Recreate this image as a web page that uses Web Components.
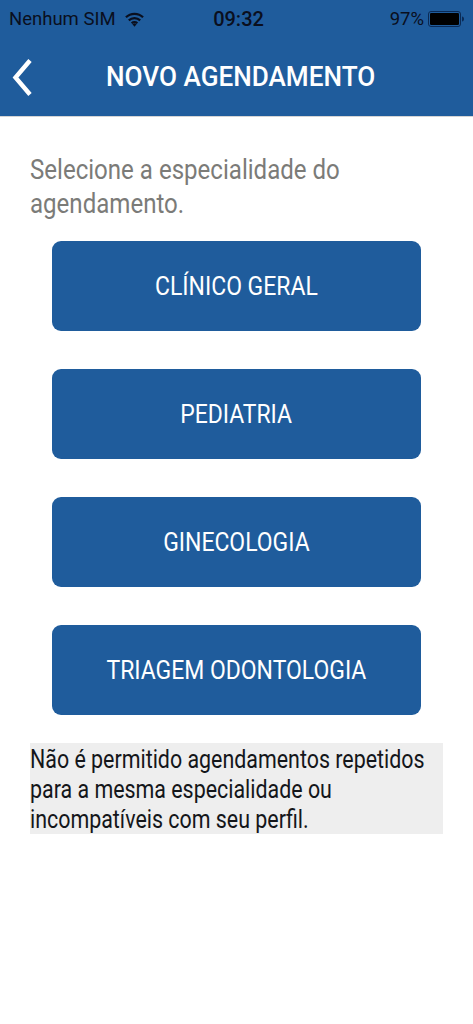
<!DOCTYPE html>
<title>Novo agendamento</title>
<meta charset=utf-8>
<style>
html, body { margin: 0; background: #fff; }
body { font-family: Roboto, "Liberation Sans", sans-serif; }
</style>

<template id=status-tpl>
<style>
:host { display: grid; grid-template-columns: 1fr auto 1fr; align-items: center; height: 38px; padding: 0 9px 0 9px; color: #0a0f1e; font-size: 18.5px; box-sizing: border-box; }
.left, .right { display: flex; align-items: center; }
.left { gap: 9px; }
.right { justify-content: flex-end; gap: 4px; }
.time { font-weight: 500; font-size: 20px; margin-left: 4px; }
svg { display: block; }
</style>
<div class=left><span>Nenhum SIM</span>
<svg width=19 height=15 viewBox="0 0 20 15"><path d="M1 5.2a12.8 12.8 0 0 1 18 0M4 8.4a8.6 8.6 0 0 1 12 0M7 11.4a4.4 4.4 0 0 1 6 0" fill=none stroke="#0a0f1e" stroke-width=2.3 /><path d="M10 15l-2.2-2.4a3 3 0 0 1 4.4 0z" fill="#0a0f1e"/></svg></div>
<div class=time>09:32</div>
<div class=right><span>97%</span>
<svg width=36 height=18 viewBox="0 0 36 18"><rect x=.5 y=1.5 width=32 height=15 rx=2.5 fill=none stroke="#0a2a55"/><rect x=2 y=3 width=29 height=12 rx=1.2 fill="#000"/><path d="M34 6.5c1.2.2 2 1 2 2.5s-.8 2.3-2 2.5z" fill="#0a2a55"/></svg></div>
</template>

<template id=nav-tpl>
<style>
:host { display: grid; grid-template-columns: 1fr auto 1fr; align-items: center; height: 78px; background: #1f5c9c; color: #fff; box-sizing: border-box; }
.t { font-size: 27.5px; font-weight: 500; padding-bottom: 1px; margin-left: 8px; transform: scaleX(.95); }
svg { display: block; margin-left: 12px; }
</style>
<svg width=21 height=39 viewBox="0 0 21 39"><path d="M18 2.5L3.5 19.5L18 36.5" fill=none stroke="#fff" stroke-width=4.4 /></svg>
<div class=t><slot></slot></div>
<span></span>
</template>

<template id=btn-tpl>
<style>
:host { display: flex; align-items: center; justify-content: center; height: 90px; border-radius: 9px; background: #1f5c9c; color: #fff; font-size: 25.5px; }
span { transform: scaleX(.9); white-space: nowrap; }
</style>
<span><slot></slot></span>
</template>

<template id=app-tpl>
<style>
:host { display: block; height: 1024px; overflow: hidden; }
header { background: #1f5c9c; border-bottom: 1px solid #d4d4d4; }
main { padding: 36px 30px 0; }
.lead { margin: 0; font-size: 27.5px; line-height: 34px; color: #7b7b78; width: calc(100% / .875); transform: scaleX(.875); transform-origin: 0 0; }
.list { display: flex; flex-direction: column; gap: 38px; margin: 20px 22px 0; }
.note { margin: 28px 0 0; background: #eeeeee; height: 91px; padding-top: 2px; box-sizing: border-box; overflow: hidden; }
.note p { margin: 0; color: #14161a; font-size: 25px; line-height: 30px; width: calc(100% / .856); transform: scaleX(.856); transform-origin: 0 0; }
</style>
<header><status-bar></status-bar><nav-bar>NOVO AGENDAMENTO</nav-bar></header>
<main>
<p class=lead>Selecione a especialidade do agendamento.</p>
<div class=list>
<spec-button>CLÍNICO GERAL</spec-button>
<spec-button>PEDIATRIA</spec-button>
<spec-button>GINECOLOGIA</spec-button>
<spec-button>TRIAGEM ODONTOLOGIA</spec-button>
</div>
<div class=note><p>Não é permitido agendamentos repetidos para a mesma especialidade ou incompatíveis com seu perfil.</p></div>
</main>
</template>

<new-appointment></new-appointment>

<script>
const define = (name, tpl) => customElements.define(name, class extends HTMLElement {
    constructor() {
        super();
        this.attachShadow({mode: 'open'}).appendChild(document.getElementById(tpl).content.cloneNode(true));
    }
});
define('status-bar', 'status-tpl');
define('nav-bar', 'nav-tpl');
define('spec-button', 'btn-tpl');
define('new-appointment', 'app-tpl');
</script>
